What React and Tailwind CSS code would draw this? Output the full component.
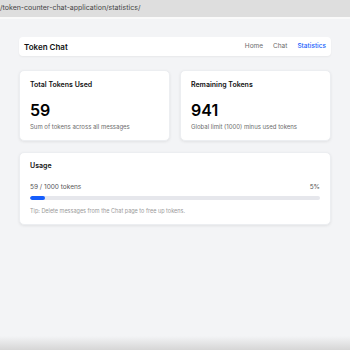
import React from 'react'

const StatCard = ({ title, value, note }) => {
  return (
    <div className="flex-1 bg-white rounded-[5px] shadow-[0_1px_3px_rgba(0,0,0,0.08)] border border-[#eceef1] px-[10px] pt-[9px] pb-[9px]">
      <h3 className="text-[7px] leading-[10px] font-semibold text-[#111111]">{title}</h3>
      <p className="mt-[10px] text-[16px] leading-[20px] font-semibold text-black">{value}</p>
      <p className="mt-[3px] text-[6px] leading-[8px] text-[#6b6b6b]">{note}</p>
    </div>
  )
}

const App = () => {
  const used = 59
  const limit = 1000
  const pct = Math.floor((used / limit) * 100)

  return (
    <div className="h-[350px] w-[350px] flex flex-col bg-[#f3f4f6] overflow-hidden" style={{ fontFamily: 'Inter, "Liberation Sans", sans-serif' }}>
      <div className="h-[17px] bg-[#dedede] flex items-center text-[7px] text-[#444444] whitespace-nowrap">
        /token-counter-chat-application/statistics/
      </div>
      <div className="h-[2px] bg-[#fafafa]"></div>

      <div className="flex-1 px-[19px] pt-[18px]">
        <div className="h-[19px] bg-white rounded-[4px] shadow-[0_1px_2px_rgba(0,0,0,0.05)] flex items-center justify-between pl-[5px] pr-[5px]">
          <span className="text-[8px] font-semibold text-[#111111]">Token Chat</span>
          <nav className="flex items-center gap-[10px] text-[6.5px]">
            <span className="text-[#6b6b6b]">Home</span>
            <span className="text-[#6b6b6b]">Chat</span>
            <span className="text-blue-600 font-medium">Statistics</span>
          </nav>
        </div>

        <div className="mt-[14px] flex gap-[10px]">
          <StatCard title="Total Tokens Used" value={used} note="Sum of tokens across all messages" />
          <StatCard title="Remaining Tokens" value={limit - used} note="Global limit (1000) minus used tokens" />
        </div>

        <div className="mt-[11px] bg-white rounded-[5px] shadow-[0_1px_3px_rgba(0,0,0,0.08)] border border-[#eceef1] px-[10px] pt-[8px] pb-[9px]">
          <h3 className="text-[7px] leading-[10px] font-semibold text-[#111111]">Usage</h3>
          <div className="mt-[12px] flex justify-between text-[6.5px] leading-[8px] text-[#555555]">
            <span>{used} / {limit} tokens</span>
            <span>{pct}%</span>
          </div>
          <div className="mt-[5px] h-[4px] rounded-full bg-[#e6e7ec] overflow-hidden">
            <div className="h-full rounded-full bg-blue-600" style={{ width: pct + '%' }}></div>
          </div>
          <p className="mt-[7px] text-[5.5px] leading-[8px] text-[#9a9a9a]">Tip: Delete messages from the Chat page to free up tokens.</p>
        </div>
      </div>

      <div className="h-[14px] bg-gradient-to-b from-[#f3f4f6] to-[#d6d6d6]"></div>
    </div>
  )
}

export default App
